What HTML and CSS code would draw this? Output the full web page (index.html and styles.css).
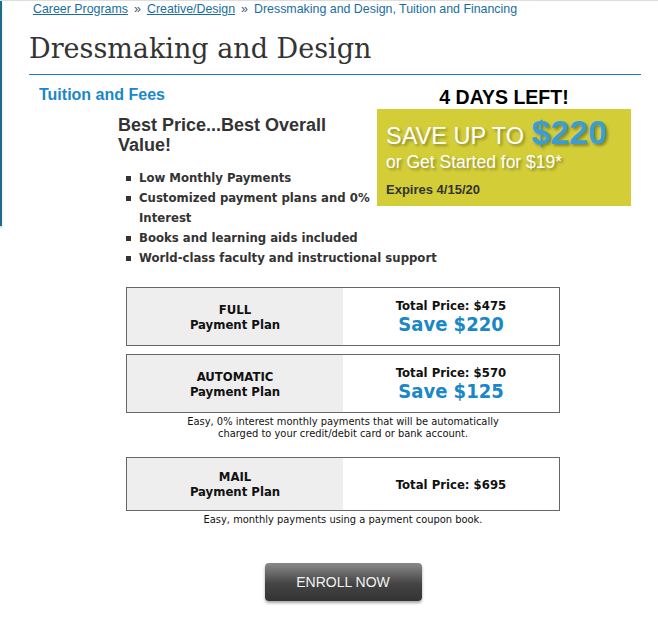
FILE: index.html
```html
<!DOCTYPE html>
<html>
<head>
    <meta charset="utf-8">
    <title>Dressmaking and Design, Tuition and Financing</title>
    <link rel="stylesheet" href="styles.css">
</head>

<body>
<div class="page">
    <div class="rail"></div>

    <main class="content">
        <nav class="crumbs">
            <a href="#">Career Programs</a><span class="sep">&raquo;</span><a href="#">Creative/Design</a><span class="sep">&raquo;</span><span>Dressmaking and Design, Tuition and Financing</span>
        </nav>

        <h1 class="title">Dressmaking and Design</h1>

        <section class="tuition">
            <aside class="promo">
                <p class="promo-countdown">4 DAYS LEFT!</p>
                <div class="promo-box">
                    <p class="promo-save">SAVE UP TO <strong>$220</strong></p>
                    <p class="promo-start">or Get Started for $19*</p>
                    <p class="promo-expires">Expires 4/15/20</p>
                </div>
            </aside>

            <h2 class="section-title">Tuition and Fees</h2>
            <h3 class="value-title">Best Price...Best Overall Value!</h3>

            <ul class="perks">
                <li>Low Monthly Payments</li>
                <li>Customized payment plans and 0% Interest</li>
                <li>Books and learning aids included</li>
                <li>World-class faculty and instructional support</li>
            </ul>

            <div class="plans">
                <div class="plan">
                    <div class="plan-name">FULL<br>Payment Plan</div>
                    <div class="plan-price">
                        <div class="plan-total">Total Price: $475</div>
                        <div class="plan-save">Save $220</div>
                    </div>
                </div>

                <div class="plan">
                    <div class="plan-name">AUTOMATIC<br>Payment Plan</div>
                    <div class="plan-price">
                        <div class="plan-total">Total Price: $570</div>
                        <div class="plan-save">Save $125</div>
                    </div>
                </div>
                <p class="plan-note">Easy, 0% interest monthly payments that will be automatically<br>charged to your credit/debit card or bank account.</p>

                <div class="plan plan-mail">
                    <div class="plan-name">MAIL<br>Payment Plan</div>
                    <div class="plan-price">
                        <div class="plan-total">Total Price: $695</div>
                    </div>
                </div>
                <p class="plan-note">Easy, monthly payments using a payment coupon book.</p>

                <a class="enroll" href="#">ENROLL NOW</a>
            </div>
        </section>
    </main>
</div>
</body>
</html>
```

FILE: styles.css
```css
body {
    margin: 0;
    background: #fff;
    color: #333;
    font-family: "Liberation Sans", Arial, sans-serif;
}

p, h1, h2, h3, ul {
    margin: 0;
}

.page {
    display: flex;
    align-items: flex-start;
    border-top: 1px solid #ddd;
}

.rail {
    flex: none;
    width: 2px;
    height: 225px;
    background: #1d6d8a;
    box-shadow: 0 2px 2px rgba(0, 0, 0, 0.2);
}

.content {
    flex: 1;
    padding: 0 17px 0 27px;
}

/* breadcrumb */
.crumbs {
    margin-left: 4px;
    padding-top: 1px;
    font-size: 12.4px;
    line-height: 15px;
    color: #1a6e9e;
}
.crumbs a {
    color: #1a6e9e;
}
.crumbs .sep {
    padding: 0 6px;
    color: #3a5a70;
}

.title {
    margin-top: 14px;
    padding-bottom: 7px;
    border-bottom: 1px solid #1a7fc1;
    font-family: "DejaVu Serif", "Liberation Serif", serif;
    font-size: 27px;
    font-weight: normal;
    line-height: 36px;
    color: #333;
}

/* promo */
.promo {
    float: right;
    width: 254px;
    margin-right: 10px;
}
.promo-countdown {
    font-size: 19.5px;
    font-weight: bold;
    line-height: 23px;
    text-align: center;
    color: #000;
}
.promo-box {
    padding: 7px 9px 8px;
    background: #d3ce38;
}
.promo-save {
    font-size: 23.5px;
    line-height: 32px;
    color: #fff;
    text-shadow: 2px 2px 3px rgba(0, 0, 0, 0.35);
}
.promo-save strong {
    margin-left: 1px;
    font-size: 34px;
    color: #3a9ed6;
}
.promo-start {
    font-size: 17.5px;
    line-height: 20px;
    color: #fff;
    text-shadow: 2px 2px 3px rgba(0, 0, 0, 0.35);
}
.promo-expires {
    margin-top: 10px;
    font-size: 13px;
    font-weight: bold;
    line-height: 16px;
    color: #333;
}

/* tuition */
.section-title {
    margin: 11px 0 0 10px;
    font-size: 16px;
    line-height: 18px;
    color: #1a87c9;
}
.value-title {
    margin: 11px 0 0 89px;
    font-size: 18px;
    line-height: 20px;
    color: #333;
}

.perks {
    margin: 13px 0 0 97px;
    padding: 0;
    list-style: none;
    font-family: "DejaVu Sans Condensed", "DejaVu Sans", sans-serif;
    font-stretch: condensed;
    font-size: 13px;
    font-weight: bold;
    line-height: 20px;
    color: #333;
}
.perks li {
    padding-left: 13px;
    text-indent: -13px;
}
.perks li::before {
    content: "";
    display: inline-block;
    width: 5px;
    height: 5px;
    margin-right: 8px;
    vertical-align: middle;
    background: #333;
}

/* plans */
.plans {
    clear: both;
    width: 434px;
    margin: 19px 0 0 97px;
    padding-bottom: 25px;
    text-align: center;
    font-family: "DejaVu Sans Condensed", "DejaVu Sans", sans-serif;
    font-stretch: condensed;
    color: #111;
}
.plan {
    display: grid;
    grid-template-columns: 1fr 1fr;
    margin-bottom: 8px;
    border: 1px solid #666;
    font-size: 13px;
    font-weight: bold;
    line-height: 15px;
}
.plan-mail {
    min-height: 52px;
}
.plan-name {
    display: flex;
    align-items: center;
    justify-content: center;
    padding: 10px 0;
    background: #eee;
}
.plan-price {
    display: flex;
    flex-direction: column;
    justify-content: center;
    padding: 10px 0;
}
.plan-save {
    font-size: 20px;
    line-height: 22px;
    color: #1a87c9;
}
.plan-note {
    margin: -5px 0 18px;
    font-size: 11px;
    line-height: 11.5px;
    color: #111;
}

.enroll {
    display: inline-block;
    width: 157px;
    margin-top: 19px;
    border-radius: 4px;
    background: linear-gradient(#8a8a8a, #444 55%, #333);
    box-shadow: 0 2px 3px rgba(0, 0, 0, 0.35);
    font-family: "Liberation Sans", Arial, sans-serif;
    font-size: 14px;
    line-height: 38px;
    color: #f2f2f2;
    text-decoration: none;
}
```
